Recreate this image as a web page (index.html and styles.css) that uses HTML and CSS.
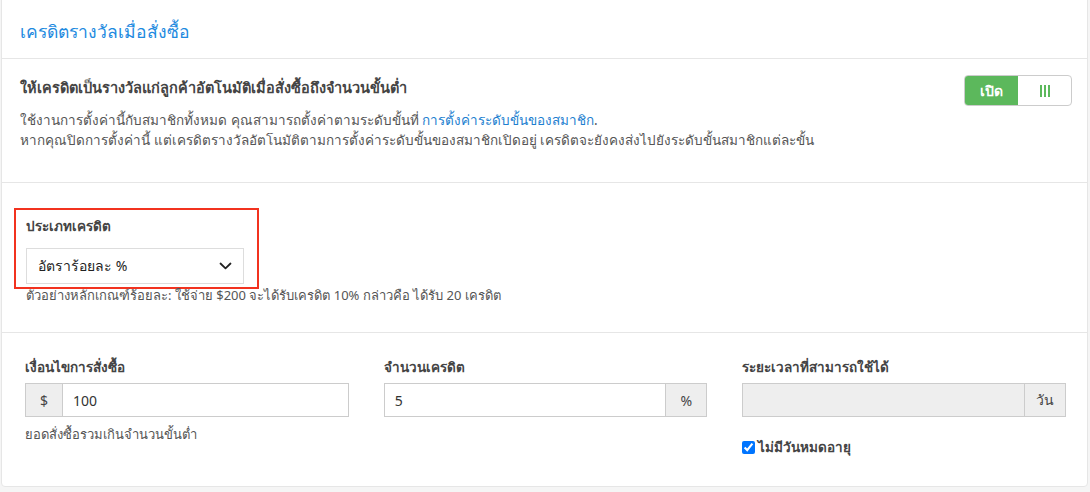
FILE: index.html
```html
<!DOCTYPE html>
<html lang="th">
<head>
    <meta charset="UTF-8">
    <title>เครดิตรางวัลเมื่อสั่งซื้อ</title>
    <link rel="stylesheet" href="styles.css">
</head>
<body>
    <div class="card">
        <div class="card-header">
            <h2>เครดิตรางวัลเมื่อสั่งซื้อ</h2>
        </div>

        <div class="section intro">
            <div class="intro-text">
                <h3>ให้เครดิตเป็นรางวัลแก่ลูกค้าอัตโนมัติเมื่อสั่งซื้อถึงจำนวนขั้นต่ำ</h3>
                <p>ใช้งานการตั้งค่านี้กับสมาชิกทั้งหมด คุณสามารถตั้งค่าตามระดับขั้นที่ <a href="#">การตั้งค่าระดับขั้นของสมาชิก</a>.<br>
                หากคุณปิดการตั้งค่านี้ แต่เครดิตรางวัลอัตโนมัติตามการตั้งค่าระดับขั้นของสมาชิกเปิดอยู่ เครดิตจะยังคงส่งไปยังระดับขั้นสมาชิกแต่ละขั้น</p>
            </div>
            <div class="toggle">
                <span class="toggle-on">เปิด</span>
                <span class="toggle-off"><i></i><i></i><i></i></span>
            </div>
        </div>

        <div class="section type">
            <div class="highlight">
                <label class="field-label">ประเภทเครดิต</label>
                <div class="select">
                    <span>อัตราร้อยละ %</span>
                    <svg width="13" height="8" viewBox="0 0 13 8"><path d="M1.5 1.5 L6.5 6.3 L11.5 1.5" fill="none" stroke="#222" stroke-width="1.8" stroke-linecap="round" stroke-linejoin="round"/></svg>
                </div>
            </div>
            <p class="help">ตัวอย่างหลักเกณฑ์ร้อยละ: ใช้จ่าย $200 จะได้รับเครดิต 10% กล่าวคือ ได้รับ 20 เครดิต</p>
        </div>

        <div class="section fields">
            <div class="field">
                <label class="field-label">เงื่อนไขการสั่งซื้อ</label>
                <div class="input-group">
                    <span class="addon addon-left">$</span>
                    <input type="text" value="100">
                </div>
                <p class="help">ยอดสั่งซื้อรวมเกินจำนวนขั้นต่ำ</p>
            </div>
            <div class="field">
                <label class="field-label">จำนวนเครดิต</label>
                <div class="input-group">
                    <input type="text" value="5">
                    <span class="addon addon-right">%</span>
                </div>
            </div>
            <div class="field">
                <label class="field-label">ระยะเวลาที่สามารถใช้ได้</label>
                <div class="input-group">
                    <input type="text" value="" disabled>
                    <span class="addon addon-right">วัน</span>
                </div>
                <label class="check"><input type="checkbox" checked> ไม่มีวันหมดอายุ</label>
            </div>
        </div>
    </div>
</body>
</html>
```

FILE: styles.css
```css
body {
    margin: 0;
    background-color: #f5f5f5;
    font-family: "Noto Sans", "DejaVu Sans", sans-serif;
    color: #555;
    font-size: 13.5px;
}
.card {
    margin: -4px 2px 0 1px;
    background: #fff;
    border: 1px solid #e6e6e6;
    border-radius: 4px;
    height: 491px;
    box-sizing: border-box;
}
.card-header {
    height: 62px;
    box-sizing: border-box;
    padding: 0 18px;
    display: flex;
    align-items: center;
    border-bottom: 1px solid #e6e6e6;
}
.card-header h2 {
    margin: 0;
    font-size: 17.5px;
    font-weight: normal;
    color: #1e8ae0;
    padding-top: 8px;
}
.section {
    border-bottom: 1px solid #e6e6e6;
}
.intro {
    height: 124px;
    box-sizing: border-box;
    padding: 17px 15px 0 18px;
    display: flex;
    justify-content: space-between;
    align-items: flex-start;
}
.intro h3 {
    margin: 0 0 12px;
    font-size: 14.5px;
    font-weight: bold;
    color: #444;
    line-height: 22px;
}
.intro p {
    margin: 0;
    line-height: 20px;
}
.intro a {
    color: #1e7fd0;
    text-decoration: none;
}
.toggle {
    margin-top: -1px;
    display: flex;
    width: 108px;
    height: 31px;
    border: 1px solid #ccc;
    border-radius: 4px;
    overflow: hidden;
    box-sizing: border-box;
    font-weight: bold;
    font-size: 14px;
}
.toggle span {
    flex: 1;
    display: flex;
    align-items: center;
    justify-content: center;
}
.toggle-on {
    background: #5cb85c;
    color: #fff;
}
.toggle-off {
    gap: 2px;
}
.toggle-off i {
    width: 2px;
    height: 12px;
    background: #5cb85c;
}
.type {
    height: 150px;
    box-sizing: border-box;
    padding: 25px 22px 0 12px;
}
.highlight {
    width: 245px;
    box-sizing: border-box;
    border: 2px solid #f2321f;
    padding: 6px 13px 3px 10px;
}
.field-label {
    display: block;
    font-size: 13.5px;
    font-weight: bold;
    color: #444;
    line-height: 20px;
    margin-bottom: 12px;
}
.select {
    height: 36px;
    box-sizing: border-box;
    border: 1px solid #ddd;
    display: flex;
    align-items: center;
    justify-content: space-between;
    padding: 0 11px 0 11px;
    font-size: 14px;
    color: #222;
}
.help {
    margin: -3px 0 0 12px;
    line-height: 18px;
    font-size: 13px;
}
.fields {
    border-bottom: none;
    padding: 24px 21px 0 23px;
    display: grid;
    grid-template-columns: 1fr 1fr 1fr;
    column-gap: 35px;
}
.fields .field-label {
    margin-bottom: 6px;
}
.input-group {
    display: flex;
    height: 34px;
}
.input-group input {
    flex: 1;
    min-width: 0;
    border: 1px solid #ccc;
    padding: 0 10px;
    font-family: inherit;
    font-size: 14px;
    color: #333;
    outline: none;
}
.input-group input:disabled {
    background: #eee;
}
.addon {
    display: flex;
    align-items: center;
    justify-content: center;
    background: #eee;
    border: 1px solid #ccc;
    font-size: 14px;
    color: #444;
}
.addon-left {
    width: 36px;
    border-right: none;
}
.addon-right {
    width: 40px;
    border-left: none;
}
.fields .help {
    margin: 8px 0 0;
}
.check {
    display: flex;
    align-items: center;
    gap: 3px;
    margin-top: 19px;
    font-weight: bold;
    color: #444;
    font-size: 13.5px;
}
.check input {
    margin: 0;
    width: 13px;
    height: 13px;
}
```
